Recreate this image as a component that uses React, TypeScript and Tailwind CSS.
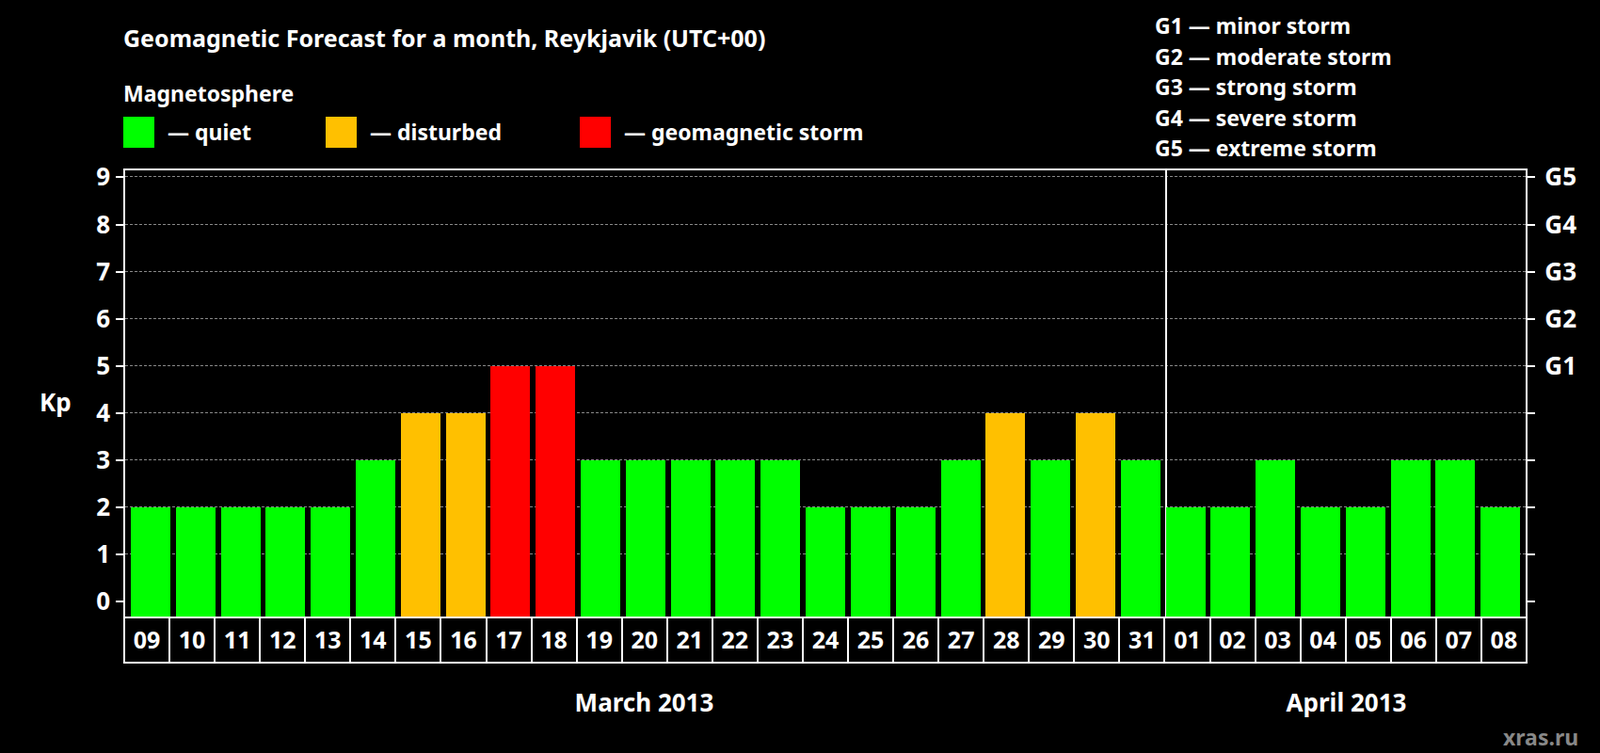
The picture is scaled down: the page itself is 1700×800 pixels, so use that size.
import React from "react";

const days = [
  ["09", 2], ["10", 2], ["11", 2], ["12", 2], ["13", 2], ["14", 3], ["15", 4], ["16", 4],
  ["17", 5], ["18", 5], ["19", 3], ["20", 3], ["21", 3], ["22", 3], ["23", 3], ["24", 2],
  ["25", 2], ["26", 2], ["27", 3], ["28", 4], ["29", 3], ["30", 4], ["31", 3], ["01", 2],
  ["02", 2], ["03", 3], ["04", 2], ["05", 2], ["06", 3], ["07", 3], ["08", 2],
] as const;

const UNIT = 50.1;
const ZERO = 16; // px from plot bottom to Kp 0

const color = (kp: number) => (kp >= 5 ? "bg-[#ff0000]" : kp === 4 ? "bg-[#ffc000]" : "bg-[#00ff00]");

const storms = ["G1 — minor storm", "G2 — moderate storm", "G3 — strong storm", "G4 — severe storm", "G5 — extreme storm"];

export default function App() {
  return (
    <div className="flex h-[800px] w-[1700px] flex-col bg-black pl-[131px] font-[family-name:'Liberation_Sans',Arial,sans-serif] font-bold text-white">
      {/* header */}
      <div className="flex h-[182px]">
        <div className="flex w-[1096px] flex-col">
          <div className="mt-[26px] text-[25px] leading-[28px]">Geomagnetic Forecast for a month, Reykjavik (UTC+00)</div>
          <div className="mt-[32px] text-[23px] leading-[26px]">Magnetosphere</div>
          <div className="mt-[11px] flex items-center text-[23px]">
            <span className="h-[33px] w-[33px] bg-[#00ff00]" />
            <span className="ml-[14px] w-[168px]">— quiet</span>
            <span className="h-[33px] w-[33px] bg-[#ffc000]" />
            <span className="ml-[14px] w-[223px]">— disturbed</span>
            <span className="h-[33px] w-[33px] bg-[#ff0000]" />
            <span className="ml-[14px]">— geomagnetic storm</span>
          </div>
        </div>
        <div className="mt-[11px] flex flex-col text-[23px] leading-[32.5px]">
          {storms.map((s) => <span key={s}>{s}</span>)}
        </div>
      </div>

      {/* plot */}
      <div className="relative h-[486px] w-[1492px] border-2 border-b-0 border-white">
        {[1, 2, 3, 4, 5, 6, 7, 8, 9].map((k) => (
          <div key={k} className="absolute left-0 right-0 border-t border-dashed border-[#888]" style={{ bottom: ZERO + k * UNIT }} />
        ))}
        {[0, 1, 2, 3, 4, 5, 6, 7, 8, 9].map((k) => (
          <React.Fragment key={k}>
            <div className="absolute -left-[64px] w-[48px] text-right text-[26px] leading-none" style={{ bottom: ZERO + k * UNIT - 12 }}>{k}</div>
            <div className="absolute -left-[10px] h-[2px] w-[8px] bg-white" style={{ bottom: ZERO + k * UNIT - 1 }} />
            <div className="absolute -right-[10px] h-[2px] w-[8px] bg-white" style={{ bottom: ZERO + k * UNIT - 1 }} />
            {k >= 5 && (
              <div className="absolute -right-[54px] text-[26px] leading-none" style={{ bottom: ZERO + k * UNIT - 12 }}>G{k - 4}</div>
            )}
          </React.Fragment>
        ))}
        <div className="absolute -left-[91px] top-[227px] text-[26px]">Kp</div>
        <div className="absolute bottom-0 left-[1105px] top-0 w-[2px] bg-white" />
        <div className="absolute inset-0 flex items-end px-[3px]">
          {days.map(([d, kp], i) => (
            <div key={i} className="flex h-full flex-1 items-end justify-center">
              <div className={`w-[42px] ${color(kp)}`} style={{ height: ZERO + kp * UNIT }} />
            </div>
          ))}
        </div>
      </div>

      {/* date row */}
      <div className="flex h-[50px] w-[1492px] border-2 border-white">
        {days.map(([d], i) => (
          <div key={i} className="flex flex-1 items-center justify-center border-r-2 border-white text-[25px] last:border-r-0">{d}</div>
        ))}
      </div>

      <div className="flex w-[1492px] pt-[22px] text-[26px]">
        <div className="w-[1107px] text-center">March 2013</div>
        <div className="flex-1 text-center">April 2013</div>
      </div>
      <div className="ml-[1466px] mt-[0px] text-[23px] text-[#888]">xras.ru</div>
    </div>
  );
}
